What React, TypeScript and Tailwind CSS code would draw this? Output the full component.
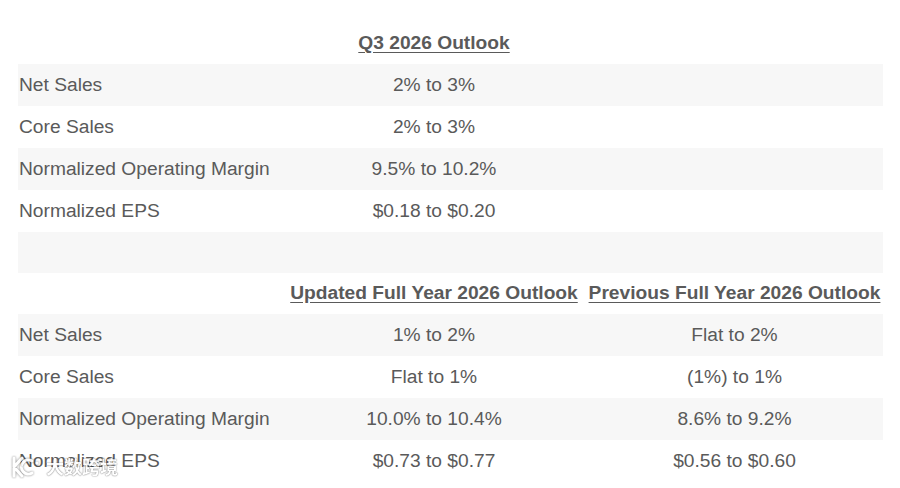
const rows1 = [
  { label: "Net Sales", q3: "2% to 3%" },
  { label: "Core Sales", q3: "2% to 3%" },
  { label: "Normalized Operating Margin", q3: "9.5% to 10.2%" },
  { label: "Normalized EPS", q3: "$0.18 to $0.20" },
];

const rows2 = [
  { label: "Net Sales", updated: "1% to 2%", previous: "Flat to 2%" },
  { label: "Core Sales", updated: "Flat to 1%", previous: "(1%) to 1%" },
  { label: "Normalized Operating Margin", updated: "10.0% to 10.4%", previous: "8.6% to 9.2%" },
  { label: "Normalized EPS", updated: "$0.73 to $0.77", previous: "$0.56 to $0.60" },
];

const rowCls = "grid grid-cols-[264px_304px_297px] h-[42px] items-center";

export default function App() {
  return (
    <div
      className="relative w-[900px] h-[488px] bg-white overflow-hidden text-[19.2px] text-[#5a5a5a]"
      style={{ fontFamily: '"Liberation Sans", Arial, sans-serif' }}
    >
      <div className="pt-[22px] pl-[18px] w-[883px]">
        {/* Q3 outlook */}
        <div className={rowCls}>
          <div />
          <div className="text-center font-bold underline underline-offset-[3px]">Q3 2026 Outlook</div>
          <div />
        </div>
        {rows1.map((r, i) => (
          <div key={r.label} className={`${rowCls} ${i % 2 === 0 ? "bg-[#f7f7f7]" : "bg-white"}`}>
            <div className="pl-px whitespace-nowrap">{r.label}</div>
            <div className="text-center">{r.q3}</div>
            <div />
          </div>
        ))}

        {/* spacer */}
        <div className="h-[41px] bg-[#f7f7f7]" />

        {/* Full year outlook */}
        <div className="grid grid-cols-[264px_304px_297px] h-[41px] items-center">
          <div />
          <div className="text-center font-bold underline underline-offset-[3px] whitespace-nowrap">
            Updated Full Year 2026 Outlook
          </div>
          <div className="text-center font-bold underline underline-offset-[3px] whitespace-nowrap">
            Previous Full Year 2026 Outlook
          </div>
        </div>
        {rows2.map((r, i) => (
          <div key={r.label} className={`${rowCls} ${i % 2 === 0 ? "bg-[#f7f7f7]" : "bg-white"}`}>
            <div className="pl-px whitespace-nowrap">{r.label}</div>
            <div className="text-center">{r.updated}</div>
            <div className="text-center">{r.previous}</div>
          </div>
        ))}
      </div>

      {/* watermark */}
      <div className="absolute left-[10px] top-[453px] flex items-center gap-[6px] opacity-90">
        <svg width="30" height="24" viewBox="0 0 30 24" fill="none">
          <path
            d="M4 3v18M4 12l8-9M4 12l8 9M22 6a7 7 0 1 0 0 12"
            stroke="white"
            strokeWidth="3"
            strokeLinecap="round"
            style={{ filter: "drop-shadow(0 0 1px rgba(0,0,0,0.55))" }}
          />
          <circle cx="27" cy="8" r="1.6" fill="white" style={{ filter: "drop-shadow(0 0 1px rgba(0,0,0,0.55))" }} />
        </svg>
        <span
          className="text-[18px] font-bold text-white"
          style={{
            fontFamily: '"Noto Sans CJK SC", sans-serif',
            textShadow: "0 0 1px rgba(0,0,0,0.6), 0 0 2px rgba(0,0,0,0.35)",
          }}
        >
          大数跨境
        </span>
      </div>
    </div>
  );
}
